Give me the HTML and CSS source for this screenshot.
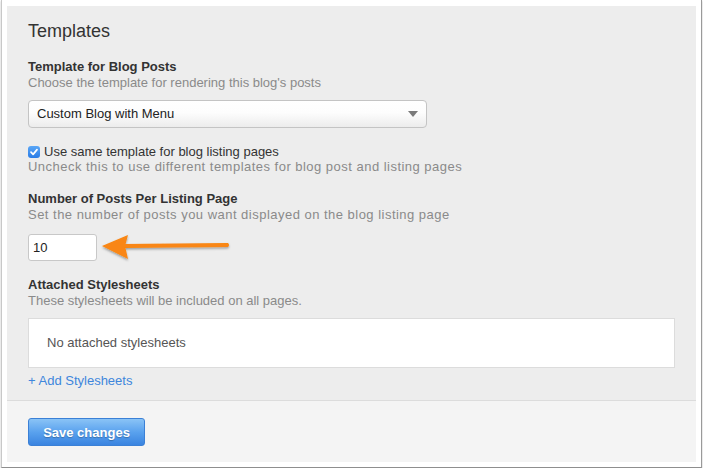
FILE: index.html
```html
<!DOCTYPE html>
<html lang="en">
<head>
  <meta charset="UTF-8">
  <title>Templates</title>
  <link rel="stylesheet" href="styles.css">
</head>
<body>
<div class="frame">
  <div class="panel">

    <div class="panel-body">
      <h2 class="title">Templates</h2>

      <!-- Template for posts -->
      <div class="field">
        <label class="label">Template for Blog Posts</label>
        <div class="help">Choose the template for rendering this blog's posts</div>
        <div class="select">
          <span>Custom Blog with Menu</span>
          <span class="caret"></span>
        </div>
      </div>

      <div class="field">
        <div class="check-row">
          <span class="checkbox">
            <svg width="10" height="10" viewBox="0 0 10 10"><path d="M2 5.2 L4.1 7.4 L8 2.6" fill="none" stroke="#fff" stroke-width="1.7" stroke-linecap="round" stroke-linejoin="round"/></svg>
          </span>
          <span>Use same template for blog listing pages</span>
        </div>
        <div class="help help-wide">Uncheck this to use different templates for blog post and listing pages</div>
      </div>

      <!-- Posts per page -->
      <div class="field">
        <label class="label">Number of Posts Per Listing Page</label>
        <div class="help help-wide">Set the number of posts you want displayed on the blog listing page</div>
        <div class="input-row">
          <div class="input">10</div>
          <svg class="pointer" width="134" height="34" viewBox="0 0 134 34">
            <defs>
              <filter id="shade" x="-10%" y="-30%" width="120%" height="160%">
                <feDropShadow dx="0" dy="1.5" stdDeviation="1.2" flood-color="#000" flood-opacity="0.35"/>
              </filter>
            </defs>
            <g filter="url(#shade)">
              <path d="M2 14 L28 3 L25 14 L28 27 Z" fill="#f98612"/>
              <path d="M24 12 L128 11 Q130 13 128 15 L24 16 Z" fill="#f98612"/>
            </g>
          </svg>
        </div>
      </div>

      <!-- Stylesheets -->
      <div class="field">
        <label class="label">Attached Stylesheets</label>
        <div class="help">These stylesheets will be included on all pages.</div>
        <div class="sheet-box">No attached stylesheets</div>
        <a class="add-link" href="#">+ Add Stylesheets</a>
      </div>
    </div>

    <div class="panel-footer">
      <button class="btn-save">Save changes</button>
    </div>

  </div>
</div>
</body>
</html>
```

FILE: styles.css
```css
body {
  margin: 0;
  background: #fff;
  font-family: "Liberation Sans", Arial, sans-serif;
  font-size: 13px;
  line-height: 16px;
  color: #333;
}

.frame {
  width: 689px;
  margin-left: 1px;
  padding: 6px 5px 5px 5px;
  border-left: 1px solid #c8c8c8;
  border-right: 1px solid #9a9a9a;
  border-bottom: 1px solid #8e8e8e;
  box-shadow: 0 1px 2px rgba(0, 0, 0, 0.25);
}

.panel {
  background: #ededed;
}

.panel-body {
  padding: 14px 21px 11px 21px;
}

.title {
  margin: 0 0 17px 0;
  font-size: 18px;
  line-height: 22px;
  font-weight: normal;
  color: #333;
}

.field {
  margin-bottom: 16px;
}

.label {
  display: block;
  font-weight: bold;
  color: #333;
}

.help {
  color: #8a8a8a;
}

.help-wide {
  letter-spacing: 0.48px;
}

.select {
  display: flex;
  align-items: center;
  justify-content: space-between;
  box-sizing: border-box;
  width: 399px;
  height: 28px;
  margin-top: 9px;
  padding: 0 8px 0 8px;
  border: 1px solid #c4c4c4;
  border-radius: 4px;
  background: linear-gradient(#ffffff, #fdfdfd 45%, #ececec);
  color: #222;
}

.caret {
  width: 0;
  height: 0;
  border-left: 5px solid transparent;
  border-right: 5px solid transparent;
  border-top: 6px solid #7a7a7a;
}

.check-row {
  display: flex;
  align-items: center;
  line-height: 15px;
  color: #333;
}

.checkbox {
  display: flex;
  align-items: center;
  justify-content: center;
  width: 12px;
  height: 12px;
  margin-right: 4px;
  border-radius: 3px;
  background: linear-gradient(#5aa6f6, #2a7ce6);
}

.input-row {
  position: relative;
  margin-top: 11px;
  height: 27px;
}

.input {
  box-sizing: border-box;
  width: 69px;
  height: 27px;
  padding: 5px 4px;
  border: 1px solid #c8c8c8;
  border-radius: 3px;
  background: #fff;
  color: #222;
}

/* annotation arrow drawn over the screenshot */
.pointer {
  position: absolute;
  left: 72px;
  top: -2px;
}

.sheet-box {
  margin-top: 9px;
  padding: 16px 18px;
  border: 1px solid #dcdcdc;
  background: #fff;
  color: #555;
}

.add-link {
  display: inline-block;
  margin-top: 5px;
  color: #3e86dc;
  text-decoration: none;
}

.panel-body .field:last-child {
  margin-bottom: 0;
}

.panel-footer {
  border-top: 1px solid #dcdcdc;
  background: #f4f4f4;
  padding: 17px 21px 16px 21px;
}

.btn-save {
  display: block;
  width: 117px;
  height: 28px;
  padding: 0;
  border: 1px solid #3b80d6;
  border-radius: 3px;
  background: linear-gradient(#8ac3f6, #5aa2ee 50%, #3a84e0);
  color: #fff;
  font-family: "Liberation Sans", Arial, sans-serif;
  font-size: 13px;
  font-weight: bold;
  text-shadow: 0 1px 1px rgba(0, 0, 0, 0.25);
}
```
